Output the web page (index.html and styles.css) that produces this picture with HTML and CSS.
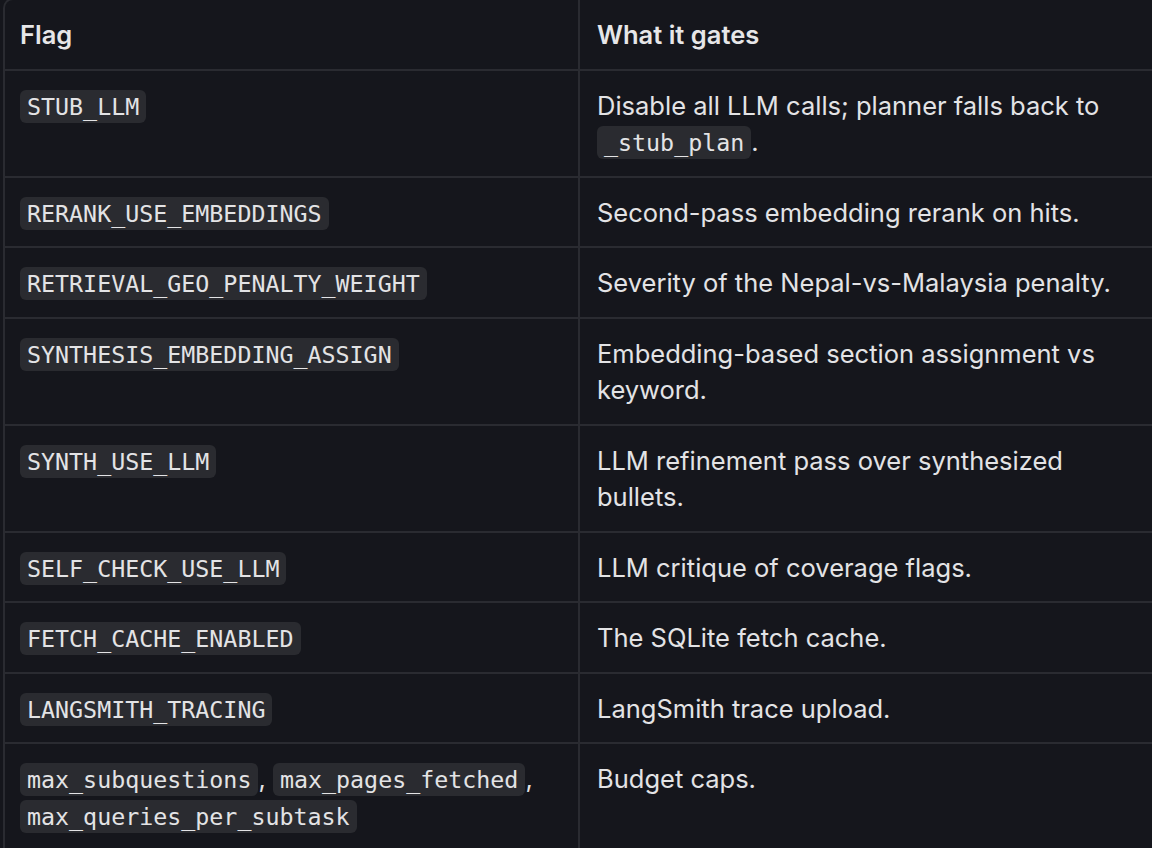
FILE: index.html
```html
<!DOCTYPE html>
<html>
<head>
  <meta charset="UTF-8">
  <title>Feature flags</title>
  <link rel="stylesheet" href="styles.css">
</head>
<body>
  <table class="flags">
    <colgroup>
      <col class="col-flag">
      <col class="col-gate">
    </colgroup>
    <thead>
      <tr>
        <th>Flag</th>
        <th>What it gates</th>
      </tr>
    </thead>
    <tbody>
      <tr>
        <td><code>STUB_LLM</code></td>
        <td>Disable all LLM calls; planner falls back to <code>_stub_plan</code>.</td>
      </tr>
      <tr>
        <td><code>RERANK_USE_EMBEDDINGS</code></td>
        <td>Second-pass embedding rerank on hits.</td>
      </tr>
      <tr>
        <td><code>RETRIEVAL_GEO_PENALTY_WEIGHT</code></td>
        <td>Severity of the Nepal-vs-Malaysia penalty.</td>
      </tr>
      <tr>
        <td><code>SYNTHESIS_EMBEDDING_ASSIGN</code></td>
        <td>Embedding-based section assignment vs keyword.</td>
      </tr>
      <tr>
        <td><code>SYNTH_USE_LLM</code></td>
        <td>LLM refinement pass over synthesized bullets.</td>
      </tr>
      <tr>
        <td><code>SELF_CHECK_USE_LLM</code></td>
        <td>LLM critique of coverage flags.</td>
      </tr>
      <tr>
        <td><code>FETCH_CACHE_ENABLED</code></td>
        <td>The SQLite fetch cache.</td>
      </tr>
      <tr>
        <td><code>LANGSMITH_TRACING</code></td>
        <td>LangSmith trace upload.</td>
      </tr>
      <tr>
        <td><code>max_subquestions</code>, <code>max_pages_fetched</code>, <code>max_queries_per_subtask</code></td>
        <td>Budget caps.</td>
      </tr>
    </tbody>
  </table>
</body>
</html>
```

FILE: styles.css
```css
html, body {
  margin: 0;
  padding: 0;
  background: #15161c;
  color: #e3e3e5;
  font-family: Inter, 'Noto Sans', sans-serif;
  overflow: hidden;
}
.flags {
  margin: -2px 0 0 3px;
  border-collapse: separate;
  border-spacing: 0;
  border-left: 2px solid #2a2b31;
  border-top: 2px solid #2a2b31;
  border-top-left-radius: 10px;
  table-layout: fixed;
  width: 1152px;
  font-size: 25.5px;
  line-height: 36.5px;
}
.col-flag {
  width: 575px;
}
.flags th,
.flags td {
  text-align: left;
  vertical-align: top;
  padding: 17px 17px 15px;
  border-bottom: 2px solid #2a2b31;
}
.flags th {
  font-weight: 600;
  color: #e6e6e8;
}
.flags th:first-child,
.flags td:first-child {
  padding-left: 15px;
  border-right: 2px solid #2a2b31;
}
code {
  font-family: 'DejaVu Sans Mono', monospace;
  font-size: 23.3px;
  line-height: 1;
  background: #2a2b30;
  border-radius: 6px;
  padding: 3px 7px;
  color: #e3e3e5;
}
```
